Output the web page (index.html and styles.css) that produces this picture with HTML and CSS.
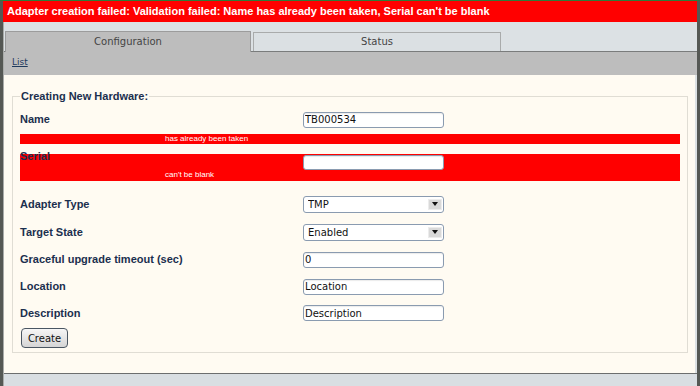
FILE: index.html
```html
<!DOCTYPE html>
<html>
<head>
<meta charset="utf-8">
<link rel="stylesheet" href="styles.css">
</head>
<body>
<div class="frame">
  <div class="flash">Adapter creation failed: Validation failed: Name has already been taken, Serial can't be blank</div>
  <div class="panel">
    <div class="tabs">
      <div class="tab active">Configuration</div>
      <div class="tab">Status</div>
    </div>
    <div class="subbar"><a href="#" class="link">List</a></div>
    <div class="content">
      <fieldset class="box">
        <legend class="legend">Creating New Hardware:</legend>
        <div class="row row-name">
          <label class="label">Name</label>
          <input class="field" type="text" value="TB000534">
        </div>
        <div class="errbar">has already been taken</div>
        <div class="errblock">
          <div class="row row-serial">
            <label class="label label-up">Serial</label>
            <input class="field" type="text" value="">
          </div>
          <div class="errtext">can't be blank</div>
        </div>
        <div class="row row-sel first">
          <label class="label">Adapter Type</label>
          <div class="selwrap">
            <select class="sel"><option>TMP</option></select>
            <span class="arrow"><svg width="6" height="4" viewBox="0 0 6 4"><path d="M0 0H6L3 4Z" fill="#111"/></svg></span>
          </div>
        </div>
        <div class="row row-sel">
          <label class="label">Target State</label>
          <div class="selwrap">
            <select class="sel"><option>Enabled</option></select>
            <span class="arrow"><svg width="6" height="4" viewBox="0 0 6 4"><path d="M0 0H6L3 4Z" fill="#111"/></svg></span>
          </div>
        </div>
        <div class="row">
          <label class="label">Graceful upgrade timeout (sec)</label>
          <input class="field" type="text" value="0">
        </div>
        <div class="row">
          <label class="label">Location</label>
          <input class="field" type="text" value="Location">
        </div>
        <div class="row row-last">
          <label class="label">Description</label>
          <input class="field" type="text" value="Description">
        </div>
        <button class="btn" type="button">Create</button>
      </fieldset>
    </div>
    <div class="footer"></div>
  </div>
</div>
</body>
</html>
```

FILE: styles.css
```css
html, body {
  margin: 0;
  padding: 0;
}
body {
  background: #555854;
  border-top: 1px solid #2e7b3a;
  height: 385px;
  overflow: hidden;
  font-family: "DejaVu Sans", sans-serif;
}
.frame {
  margin: 0 3px;
}
.flash {
  height: 21px;
  background: #ff0000;
  color: #ffffff;
  font-family: "Liberation Sans", Arial, sans-serif;
  font-weight: 700;
  font-size: 11px;
  line-height: 21px;
  padding-left: 4px;
  white-space: nowrap;
  overflow: hidden;
}
.panel {
  background: #dce1e4;
  border-left: 1px solid #a9aba9;
  height: 364px;
  display: flex;
  flex-direction: column;
}
.tabs {
  height: 29px;
  border-bottom: 1px solid #7a7c7c;
  display: flex;
  align-items: flex-end;
  padding-left: 1px;
  gap: 2px;
  box-sizing: content-box;
}
.tab {
  width: 246px;
  box-sizing: border-box;
  height: 19px;
  border: 1px solid #a9abab;
  border-bottom: none;
  background: #dbe0e3;
  color: #444;
  font-size: 10px;
  line-height: 18px;
  text-align: center;
}
.tab.active {
  height: 21px;
  margin-bottom: -1px;
  background: #bdbdbd;
  border-color: #9c9c9c;
  line-height: 20px;
}
.tab + .tab {
  width: 248px;
}
.subbar {
  height: 23px;
  background: #bdbdbd;
  padding-left: 8px;
  font-size: 9px;
  line-height: 20px;
}
.link {
  color: #1f3a5c;
  text-decoration: underline;
}
.content {
  background: #fffbf2;
  margin-right: 2px;
  height: 298px;
  padding-top: 15px;
  box-sizing: border-box;
}
.box {
  margin: 0 7px 0 8px;
  padding: 7px 7px 4px 7px;
  border: 1px solid #e0ddd4;
}
.legend {
  padding: 0 1px;
  font: bold 11px/13px "Liberation Sans", Arial, sans-serif;
  color: #1b2f4e;
}
.row {
  display: flex;
  align-items: center;
  height: 27px;
}
.row-name {
  height: 19px;
}
.row-sel {
  height: 28px;
}
.row-sel.first {
  margin-top: 9px;
}
.row-last {
  height: 26px;
}
.label {
  width: 283px;
  flex: none;
  font: bold 11px/13px "Liberation Sans", Arial, sans-serif;
  color: #1b2f4e;
}
.field {
  width: 141px;
  height: 16px;
  box-sizing: border-box;
  border: 1px solid #8a9bb0;
  border-radius: 3px;
  background: #ffffff;
  box-shadow: inset 0 1px 1px rgba(0, 0, 0, 0.08);
  padding: 0 1px;
  margin: 0;
  font: 10px "DejaVu Sans", sans-serif;
  color: #111;
  outline: none;
}
.errbar {
  margin-top: 5px;
  height: 10px;
  background: #ff0000;
  color: #ffffff;
  font: 8px/10px "Liberation Sans", Arial, sans-serif;
  padding-left: 145px;
}
.errblock {
  margin-top: 10px;
  height: 27px;
  background: #ff0000;
}
.row-serial {
  height: 16px;
  align-items: flex-start;
}
.row-serial .field {
  margin-top: 1px;
  height: 15px;
}
.label-up {
  margin-top: -4px;
}
.errtext {
  height: 10px;
  color: #ffffff;
  font: 8px/10px "Liberation Sans", Arial, sans-serif;
  padding-left: 145px;
}
.selwrap {
  position: relative;
  width: 141px;
  height: 17px;
}
.sel {
  display: block;
  -webkit-appearance: none;
  appearance: none;
  width: 100%;
  height: 100%;
  box-sizing: border-box;
  border: 1px solid #8a9bb0;
  border-radius: 3px;
  background: #ffffff;
  padding: 0 0 0 4px;
  margin: 0;
  font: 10px "DejaVu Sans", sans-serif;
  color: #111;
  outline: none;
}
.arrow {
  position: absolute;
  right: 2px;
  top: 3px;
  width: 14px;
  height: 11px;
  box-sizing: border-box;
  background: #d9d9d9;
  border: 1px solid #ececec;
  display: flex;
  align-items: center;
  justify-content: center;
}
.arrow svg {
  display: block;
}
.btn {
  display: block;
  margin: 2px 0 0 1px;
  width: 47px;
  height: 20px;
  box-sizing: border-box;
  border: 1px solid #4a5662;
  border-radius: 4px;
  background: linear-gradient(#f6f6f6, #d5d5d5);
  padding: 0;
  font: 10px "DejaVu Sans", sans-serif;
  color: #111;
}
.footer {
  flex: 1;
  border-top: 1px solid #6c6e6e;
  background: #d9dee2;
}
```
